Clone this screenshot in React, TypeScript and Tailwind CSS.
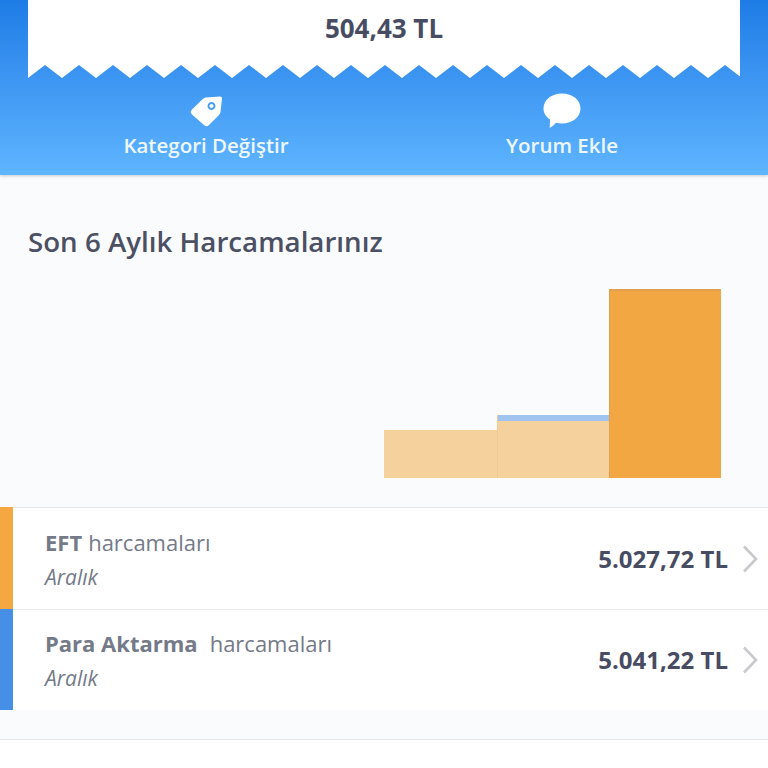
const FONT = "font-['Open_Sans',sans-serif]";

// Zigzag edge of the receipt: 21 teeth, 34px wide each
const TEETH = Array.from({ length: 21 }, (_, i) => `L${17 + i * 34} 0 L${34 + i * 34} 13`).join(' ');

const ROWS = [
  { name: 'EFT', gap: 'ml-[6px]', month: 'Aralık', amount: '5.027,72 TL', bar: 'bg-[#f5a742]', height: 'h-[102px]' },
  { name: 'Para Aktarma', gap: 'ml-[12px]', month: 'Aralık', amount: '5.041,22 TL', bar: 'bg-[#458fe6]', height: 'h-[101px]' },
];

function TagIcon() {
  return (
    <svg width="34" height="34" viewBox="0 0 34 34">
      <path
        fill="#fff"
        fillRule="evenodd"
        d="M17 3.5 L31 2.5 Q33 2.5 33 4.5 L31.5 18 Q31.3 19.5 30 21 L20 31 Q17.5 33.5 15 31 L3 20.5 Q0.5 18 3 15.5 L13.5 5.2 Q15 3.7 17 3.5 Z M22.5 8 a4 4 0 1 0 0.01 0 Z M22.5 10 a2 2 0 1 1 -0.01 0 Z"
      />
    </svg>
  );
}

function BubbleIcon() {
  return (
    <svg width="38" height="36" viewBox="0 0 38 36">
      <path
        fill="#fff"
        d="M19 0.5 C29.5 0.5 37.5 7 37.5 15.5 C37.5 24 29.5 30.5 19 30.5 C16.8 30.5 14.8 30.2 13 29.7 C11 32 8 34.5 6.7 35 L7 26.5 C3 24 0.5 20 0.5 15.5 C0.5 7 8.5 0.5 19 0.5 Z"
      />
    </svg>
  );
}

function Chevron() {
  return (
    <svg width="16" height="28" viewBox="0 0 16 28" fill="none" className="ml-[14px]">
      <path d="M2 1.5 L14 14 L2 26.5" stroke="#c8c9cc" strokeWidth="2.6" />
    </svg>
  );
}

export default function App() {
  return (
    <div className={`${FONT} w-[768px] h-[768px] overflow-hidden bg-white`}>
      {/* Blue header with receipt */}
      <div className="h-[175px] px-7 bg-gradient-to-b from-[#1e7ce6] to-[#5fb5ff] shadow-[0_1px_3px_rgba(0,0,0,0.2)] relative">
        <div className="h-[65px] bg-white flex items-start justify-center">
          <span className="mt-[9px] text-[26px] leading-[38px] font-bold text-[#474c63]">504,43 TL</span>
        </div>
        <svg width="712" height="13" viewBox="0 0 712 13" className="block">
          <path fill="#fff" d={`M0 0 L0 13 ${TEETH} L712 0 Z`} />
        </svg>
        <div className="grid grid-cols-2 mt-[15px]">
          <div className="flex flex-col items-center">
            <div className="h-[36px] flex items-center"><TagIcon /></div>
            <span className="mt-[1px] text-[20.5px] leading-[30px] font-semibold text-[#eef7ff]">Kategori Değiştir</span>
          </div>
          <div className="flex flex-col items-center">
            <div className="h-[36px] flex items-center"><BubbleIcon /></div>
            <span className="mt-[1px] text-[20.5px] leading-[30px] font-semibold text-[#eef7ff]">Yorum Ekle</span>
          </div>
        </div>
      </div>

      {/* Chart section */}
      <div className="h-[332px] bg-[#fafbfd]">
        <h2 className="pt-[46px] pl-7 text-[27.7px] leading-[40px] font-semibold text-[#4b5063]">Son 6 Aylık Harcamalarınız</h2>
        <div className="h-[189px] mt-[28px] pr-[47px] flex items-end justify-end">
          <div className="w-[113px] h-[48px] bg-[#f5d19e]" />
          <div className="w-[112px] h-[63px] flex flex-col border-l border-[#efc991]">
            <div className="h-[6px] bg-[#a0c4ef]" />
            <div className="flex-1 bg-[#f5d19e]" />
          </div>
          <div className="w-[112px] h-[189px] bg-[#f3a742] border-t-2 border-l border-[#e0a050]" />
        </div>
      </div>

      {/* Expense rows */}
      <div className="bg-white">
        {ROWS.map((row) => (
          <div key={row.name} className={`flex ${row.height}`}>
            <div className={`w-[13px] ${row.bar}`} />
            <div className="flex-1 flex items-center pl-[32px] pr-[10px] border-t border-[#e8e9ec]">
              <div className="flex-1 flex flex-col pt-[1px]">
                <div className="text-[22px] leading-[34px] text-[#747a88]">
                  <span className="font-bold">{row.name}</span>
                  <span className={row.gap}>harcamaları</span>
                </div>
                <div className="mt-[1px] text-[21px] leading-[34px] italic text-[#747a88]">{row.month}</div>
              </div>
              <span className="text-[24px] font-bold text-[#474c63]">{row.amount}</span>
              <Chevron />
            </div>
          </div>
        ))}
      </div>

      <div className="h-[30px] bg-[#fafbfd] border-b border-[#e8e9ec]" />
    </div>
  );
}
